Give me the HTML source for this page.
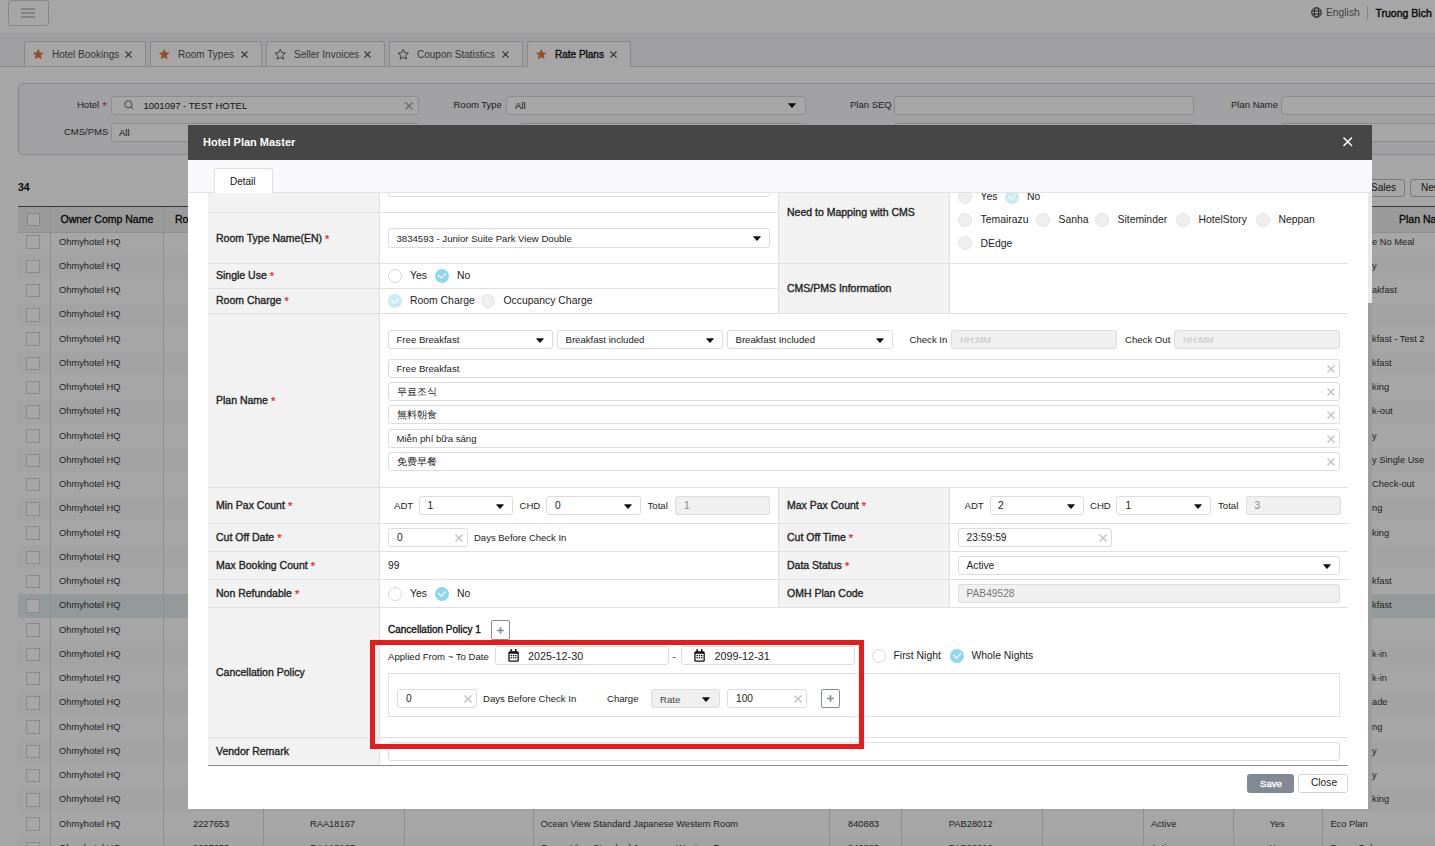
<!DOCTYPE html>
<html><head><meta charset="utf-8">
<style>
*{box-sizing:border-box;margin:0;padding:0}
html,body{width:1435px;height:846px;overflow:hidden;background:#fff;font-family:"Liberation Sans",sans-serif;color:#222}
.a{position:absolute}
.tx{position:absolute;white-space:nowrap;line-height:1}
#bg{position:absolute;left:0;top:0;width:1435px;height:846px;overflow:hidden}
#ov{position:absolute;left:0;top:0;width:1435px;height:846px;background:rgba(0,0,0,0.35)}
#modal{position:absolute;left:188px;top:125px;width:1184px;height:684px;background:#fff;overflow:hidden}
#mc{position:absolute;left:-188px;top:-125px;width:1435px;height:846px}
</style></head><body>
<div id="bg">
<div class="a" style="left:8px;top:0px;width:41px;height:26px;border:1px solid #cfcfcf;border-radius:3px;background:#fff"></div>
<div class="a" style="left:21px;top:7.9px;width:14px;height:1.8px;background:#cacaca"></div>
<div class="a" style="left:21px;top:12.1px;width:14px;height:1.8px;background:#cacaca"></div>
<div class="a" style="left:21px;top:16.3px;width:14px;height:1.8px;background:#cacaca"></div>
<svg class="a" style="left:1311px;top:7px" width="11" height="11" viewBox="0 0 11 11"><g fill="none" stroke="#333" stroke-width="1"><circle cx="5.5" cy="5.5" r="4.8"/><ellipse cx="5.5" cy="5.5" rx="2.2" ry="4.8"/><line x1="0.7" y1="4" x2="10.3" y2="4"/><line x1="0.7" y1="7" x2="10.3" y2="7"/></g></svg>
<div class="tx" style="left:1326px;top:7.12px;height:12.36px;line-height:12.36px;font-size:10.3px;color:#666;">English</div>
<div class="a" style="left:1367px;top:6px;width:1px;height:14px;background:#ccc"></div>
<div class="tx" style="left:1375.5px;top:7.0px;height:12.6px;line-height:12.6px;font-size:10.5px;color:#111;-webkit-text-stroke:0.4px #111;">Truong Bich</div>
<div class="a" style="left:0px;top:33px;width:1435px;height:34px;background:#f4f3f6"></div>
<div class="a" style="left:24px;top:41px;width:122px;height:25px;border:1px solid #d2d2d2;border-bottom:none;border-radius:3px 3px 0 0;background:#fff"></div>
<div class="a" style="left:150px;top:41px;width:112px;height:25px;border:1px solid #d2d2d2;border-bottom:none;border-radius:3px 3px 0 0;background:#fff"></div>
<div class="a" style="left:266px;top:41px;width:119px;height:25px;border:1px solid #d2d2d2;border-bottom:none;border-radius:3px 3px 0 0;background:#fff"></div>
<div class="a" style="left:389px;top:41px;width:134px;height:25px;border:1px solid #d2d2d2;border-bottom:none;border-radius:3px 3px 0 0;background:#fff"></div>
<div class="a" style="left:527px;top:41px;width:104px;height:26px;border:1px solid #d2d2d2;border-bottom:none;border-radius:3px 3px 0 0;background:#fff"></div>
<div class="a" style="left:0px;top:66px;width:527px;height:1px;background:#d4d4d4"></div>
<div class="a" style="left:631px;top:66px;width:804px;height:1px;background:#d4d4d4"></div>
<svg class="a" style="left:31.5px;top:47.5px" width="12.5" height="12.5" viewBox="0 0 24 24"><path d="M12 1.5l3.1 6.9 7.4.7-5.6 5 1.7 7.4L12 17.6l-6.6 3.9 1.7-7.4-5.6-5 7.4-.7z" fill="#e8772e"/></svg>
<div class="tx" style="left:52px;top:48.5px;height:12.0px;line-height:12.0px;font-size:10px;color:#555;">Hotel Bookings</div>
<svg class="a" style="left:125px;top:50.5px" width="7" height="7" viewBox="0 0 7 7"><path d="M0.5 0.5L6.5 6.5M6.5 0.5L0.5 6.5" stroke="#555" stroke-width="1.1"/></svg>
<svg class="a" style="left:157.5px;top:47.5px" width="12.5" height="12.5" viewBox="0 0 24 24"><path d="M12 1.5l3.1 6.9 7.4.7-5.6 5 1.7 7.4L12 17.6l-6.6 3.9 1.7-7.4-5.6-5 7.4-.7z" fill="#e8772e"/></svg>
<div class="tx" style="left:178px;top:48.5px;height:12.0px;line-height:12.0px;font-size:10px;color:#555;">Room Types</div>
<svg class="a" style="left:241px;top:50.5px" width="7" height="7" viewBox="0 0 7 7"><path d="M0.5 0.5L6.5 6.5M6.5 0.5L0.5 6.5" stroke="#555" stroke-width="1.1"/></svg>
<svg class="a" style="left:273.5px;top:47.5px" width="12.5" height="12.5" viewBox="0 0 24 24"><path d="M12 2.5l2.9 6.5 7 .7-5.3 4.7 1.6 7L12 17.8l-6.2 3.6 1.6-7L2.1 9.7l7-.7z" fill="none" stroke="#555" stroke-width="1.8" stroke-linejoin="round"/></svg>
<div class="tx" style="left:294px;top:48.5px;height:12.0px;line-height:12.0px;font-size:10px;color:#555;">Seller Invoices</div>
<svg class="a" style="left:364px;top:50.5px" width="7" height="7" viewBox="0 0 7 7"><path d="M0.5 0.5L6.5 6.5M6.5 0.5L0.5 6.5" stroke="#555" stroke-width="1.1"/></svg>
<svg class="a" style="left:396.5px;top:47.5px" width="12.5" height="12.5" viewBox="0 0 24 24"><path d="M12 2.5l2.9 6.5 7 .7-5.3 4.7 1.6 7L12 17.8l-6.2 3.6 1.6-7L2.1 9.7l7-.7z" fill="none" stroke="#555" stroke-width="1.8" stroke-linejoin="round"/></svg>
<div class="tx" style="left:417px;top:48.5px;height:12.0px;line-height:12.0px;font-size:10px;color:#555;">Coupon Statistics</div>
<svg class="a" style="left:502px;top:50.5px" width="7" height="7" viewBox="0 0 7 7"><path d="M0.5 0.5L6.5 6.5M6.5 0.5L0.5 6.5" stroke="#555" stroke-width="1.1"/></svg>
<svg class="a" style="left:534.5px;top:47.5px" width="12.5" height="12.5" viewBox="0 0 24 24"><path d="M12 1.5l3.1 6.9 7.4.7-5.6 5 1.7 7.4L12 17.6l-6.6 3.9 1.7-7.4-5.6-5 7.4-.7z" fill="#e8772e"/></svg>
<div class="tx" style="left:555px;top:48.5px;height:12.0px;line-height:12.0px;font-size:10px;color:#111;-webkit-text-stroke:0.35px #111;">Rate Plans</div>
<svg class="a" style="left:610px;top:50.5px" width="7" height="7" viewBox="0 0 7 7"><path d="M0.5 0.5L6.5 6.5M6.5 0.5L0.5 6.5" stroke="#555" stroke-width="1.1"/></svg>
<div class="a" style="left:18px;top:83px;width:1430px;height:72px;border:1px solid #d2d2d2;border-radius:5px;background:#f7f6f9"></div>
<div class="tx" style="left:77px;top:99.3px;height:11.4px;line-height:11.4px;font-size:9.5px;color:#333;">Hotel</div>
<div class="tx" style="left:102.5px;top:99.7px;height:12.6px;line-height:12.6px;font-size:10.5px;color:#e02020;">*</div>
<div class="a" style="left:110.5px;top:96px;width:308px;height:18.5px;border:1px solid #d8d8d8;border-radius:3px;background:#fff"></div>
<svg class="a" style="left:124px;top:100px" width="10" height="10" viewBox="0 0 10 10"><circle cx="4.3" cy="4.3" r="3.6" fill="none" stroke="#666" stroke-width="1"/><line x1="7" y1="7" x2="9.3" y2="9.3" stroke="#666" stroke-width="1"/></svg>
<div class="tx" style="left:143.5px;top:99.8px;height:11.4px;line-height:11.4px;font-size:9.5px;color:#222;">1001097 - TEST HOTEL</div>
<svg class="a" style="left:405px;top:101.5px" width="8" height="8" viewBox="0 0 8 8"><path d="M0.5 0.5L7.5 7.5M7.5 0.5L0.5 7.5" stroke="#aaa" stroke-width="1.5"/></svg>
<div class="tx" style="left:64px;top:126.3px;height:11.4px;line-height:11.4px;font-size:9.5px;color:#333;">CMS/PMS</div>
<div class="a" style="left:110.5px;top:123px;width:308px;height:18.5px;border:1px solid #d8d8d8;border-radius:3px;background:#fff"></div>
<div class="tx" style="left:119px;top:126.8px;height:11.4px;line-height:11.4px;font-size:9.5px;color:#222;">All</div>
<div class="tx" style="left:453.5px;top:99.3px;height:11.4px;line-height:11.4px;font-size:9.5px;color:#333;">Room Type</div>
<div class="a" style="left:505.5px;top:96px;width:300px;height:18.5px;border:1px solid #d8d8d8;border-radius:3px;background:#fff"></div>
<div class="tx" style="left:515px;top:99.8px;height:11.4px;line-height:11.4px;font-size:9.5px;color:#222;">All</div>
<svg class="a" style="left:788px;top:102.5px" width="8" height="5" viewBox="0 0 8 5"><path d="M0.7 0.2H7.3Q8 0.2 7.6 0.9L4.5 4.6Q4 5.1 3.5 4.6L0.4 0.9Q0 0.2 0.7 0.2z" fill="#111"/></svg>
<div class="a" style="left:520px;top:123px;width:285px;height:18.5px;border:1px solid #d8d8d8;border-radius:3px;background:#fff"></div>
<div class="tx" style="left:850px;top:99.3px;height:11.4px;line-height:11.4px;font-size:9.5px;color:#333;">Plan SEQ</div>
<div class="a" style="left:893.5px;top:96px;width:300px;height:18.5px;border:1px solid #d8d8d8;border-radius:3px;background:#fff"></div>
<div class="a" style="left:893.5px;top:123px;width:300px;height:18.5px;border:1px solid #d8d8d8;border-radius:3px;background:#fff"></div>
<div class="tx" style="left:1231px;top:99.3px;height:11.4px;line-height:11.4px;font-size:9.5px;color:#333;">Plan Name</div>
<div class="a" style="left:1280.5px;top:96px;width:200px;height:18.5px;border:1px solid #d8d8d8;border-radius:3px;background:#fff"></div>
<div class="a" style="left:1280.5px;top:123px;width:200px;height:18.5px;border:1px solid #d8d8d8;border-radius:3px;background:#fff"></div>
<div class="tx" style="left:18px;top:181.2px;height:12.6px;line-height:12.6px;font-size:10.5px;color:#111;font-weight:bold;">34</div>
<div class="a" style="left:1330px;top:178.5px;width:74.5px;height:18px;border:1px solid #bdbdbd;border-radius:3px;background:#fff"></div>
<div class="tx" style="left:1371px;top:182.0px;height:12.0px;line-height:12.0px;font-size:10px;color:#222;">Sales</div>
<div class="a" style="left:1409.5px;top:178.5px;width:60px;height:18px;border:1px solid #bdbdbd;border-radius:3px;background:#fff"></div>
<div class="tx" style="left:1421px;top:182.0px;height:12.0px;line-height:12.0px;font-size:10px;color:#222;">New</div>
<div class="a" style="left:18px;top:254.15px;width:1417px;height:24.25px;background:#fbfbfb"></div>
<div class="a" style="left:18px;top:302.65px;width:1417px;height:24.25px;background:#fbfbfb"></div>
<div class="a" style="left:18px;top:351.15px;width:1417px;height:24.25px;background:#fbfbfb"></div>
<div class="a" style="left:18px;top:399.65px;width:1417px;height:24.25px;background:#fbfbfb"></div>
<div class="a" style="left:18px;top:448.15px;width:1417px;height:24.25px;background:#fbfbfb"></div>
<div class="a" style="left:18px;top:496.65px;width:1417px;height:24.25px;background:#fbfbfb"></div>
<div class="a" style="left:18px;top:545.15px;width:1417px;height:24.25px;background:#fbfbfb"></div>
<div class="a" style="left:18px;top:593.65px;width:1417px;height:24.25px;background:#e4edf0"></div>
<div class="a" style="left:18px;top:642.15px;width:1417px;height:24.25px;background:#fbfbfb"></div>
<div class="a" style="left:18px;top:690.65px;width:1417px;height:24.25px;background:#fbfbfb"></div>
<div class="a" style="left:18px;top:739.15px;width:1417px;height:24.25px;background:#fbfbfb"></div>
<div class="a" style="left:18px;top:787.65px;width:1417px;height:24.25px;background:#fbfbfb"></div>
<div class="a" style="left:18px;top:836.15px;width:1417px;height:24.25px;background:#fbfbfb"></div>
<div class="a" style="left:18px;top:205.5px;width:1417px;height:1.5px;background:#555"></div>
<div class="a" style="left:18px;top:207px;width:1417px;height:25.5px;background:#efefef"></div>
<div class="a" style="left:18px;top:232px;width:1417px;height:1px;background:#dcdcdc"></div>
<div class="a" style="left:50.4px;top:207px;width:1px;height:640px;background:#dcdcdc"></div>
<div class="a" style="left:162.8px;top:207px;width:1px;height:640px;background:#dcdcdc"></div>
<div class="a" style="left:263.4px;top:207px;width:1px;height:640px;background:#dcdcdc"></div>
<div class="a" style="left:403.9px;top:207px;width:1px;height:640px;background:#dcdcdc"></div>
<div class="a" style="left:532.6px;top:207px;width:1px;height:640px;background:#dcdcdc"></div>
<div class="a" style="left:828.6px;top:207px;width:1px;height:640px;background:#dcdcdc"></div>
<div class="a" style="left:901.4px;top:207px;width:1px;height:640px;background:#dcdcdc"></div>
<div class="a" style="left:1041.6px;top:207px;width:1px;height:640px;background:#dcdcdc"></div>
<div class="a" style="left:1142.7px;top:207px;width:1px;height:640px;background:#dcdcdc"></div>
<div class="a" style="left:1232.5px;top:207px;width:1px;height:640px;background:#dcdcdc"></div>
<div class="a" style="left:1321.9px;top:207px;width:1px;height:640px;background:#dcdcdc"></div>
<div class="a" style="left:27px;top:212.5px;width:13px;height:13px;border:1px solid #d0d0d0;background:#fff"></div>
<div class="tx" style="left:60.5px;top:212.7px;height:12.6px;line-height:12.6px;font-size:10.5px;color:#111;-webkit-text-stroke:0.35px #111;">Owner Comp Name</div>
<div class="tx" style="left:175px;top:212.7px;height:12.6px;line-height:12.6px;font-size:10.5px;color:#111;-webkit-text-stroke:0.35px #111;">Room</div>
<div class="tx" style="left:1399px;top:212.7px;height:12.6px;line-height:12.6px;font-size:10.5px;color:#111;-webkit-text-stroke:0.35px #111;">Plan Name</div>
<div class="a" style="left:26.2px;top:235.3px;width:13.6px;height:13.6px;border:1px solid #d4d4d4;background:#fff"></div>
<div class="tx" style="left:59px;top:236.52px;height:11.16px;line-height:11.16px;font-size:9.3px;color:#333;">Ohmyhotel HQ</div>
<div class="tx" style="left:1372px;top:236.52px;height:11.16px;line-height:11.16px;font-size:9.3px;color:#333;">e No Meal</div>
<div class="tx" style="left:193px;top:236.52px;height:11.16px;line-height:11.16px;font-size:9.3px;color:#333;">2227653</div>
<div class="tx" style="left:310px;top:236.52px;height:11.16px;line-height:11.16px;font-size:9.3px;color:#333;">RAA18167</div>
<div class="tx" style="left:540.5px;top:236.52px;height:11.16px;line-height:11.16px;font-size:9.3px;color:#333;">Ocean View Standard Japanese Western Room</div>
<div class="tx" style="left:848px;top:236.52px;height:11.16px;line-height:11.16px;font-size:9.3px;color:#333;">840883</div>
<div class="tx" style="left:948.8px;top:236.52px;height:11.16px;line-height:11.16px;font-size:9.3px;color:#333;">PAB28012</div>
<div class="tx" style="left:1151px;top:236.52px;height:11.16px;line-height:11.16px;font-size:9.3px;color:#333;">Active</div>
<div class="tx" style="left:1269.4px;top:236.52px;height:11.16px;line-height:11.16px;font-size:9.3px;color:#333;">Yes</div>
<div class="a" style="left:26.2px;top:259.55px;width:13.6px;height:13.6px;border:1px solid #d4d4d4;background:#fff"></div>
<div class="tx" style="left:59px;top:260.77px;height:11.16px;line-height:11.16px;font-size:9.3px;color:#333;">Ohmyhotel HQ</div>
<div class="tx" style="left:1372px;top:260.77px;height:11.16px;line-height:11.16px;font-size:9.3px;color:#333;">y</div>
<div class="tx" style="left:193px;top:260.77px;height:11.16px;line-height:11.16px;font-size:9.3px;color:#333;">2227653</div>
<div class="tx" style="left:310px;top:260.77px;height:11.16px;line-height:11.16px;font-size:9.3px;color:#333;">RAA18167</div>
<div class="tx" style="left:540.5px;top:260.77px;height:11.16px;line-height:11.16px;font-size:9.3px;color:#333;">Ocean View Standard Japanese Western Room</div>
<div class="tx" style="left:848px;top:260.77px;height:11.16px;line-height:11.16px;font-size:9.3px;color:#333;">840883</div>
<div class="tx" style="left:948.8px;top:260.77px;height:11.16px;line-height:11.16px;font-size:9.3px;color:#333;">PAB28012</div>
<div class="tx" style="left:1151px;top:260.77px;height:11.16px;line-height:11.16px;font-size:9.3px;color:#333;">Active</div>
<div class="tx" style="left:1269.4px;top:260.77px;height:11.16px;line-height:11.16px;font-size:9.3px;color:#333;">Yes</div>
<div class="a" style="left:26.2px;top:283.8px;width:13.6px;height:13.6px;border:1px solid #d4d4d4;background:#fff"></div>
<div class="tx" style="left:59px;top:285.02px;height:11.16px;line-height:11.16px;font-size:9.3px;color:#333;">Ohmyhotel HQ</div>
<div class="tx" style="left:1372px;top:285.02px;height:11.16px;line-height:11.16px;font-size:9.3px;color:#333;">akfast</div>
<div class="tx" style="left:193px;top:285.02px;height:11.16px;line-height:11.16px;font-size:9.3px;color:#333;">2227653</div>
<div class="tx" style="left:310px;top:285.02px;height:11.16px;line-height:11.16px;font-size:9.3px;color:#333;">RAA18167</div>
<div class="tx" style="left:540.5px;top:285.02px;height:11.16px;line-height:11.16px;font-size:9.3px;color:#333;">Ocean View Standard Japanese Western Room</div>
<div class="tx" style="left:848px;top:285.02px;height:11.16px;line-height:11.16px;font-size:9.3px;color:#333;">840883</div>
<div class="tx" style="left:948.8px;top:285.02px;height:11.16px;line-height:11.16px;font-size:9.3px;color:#333;">PAB28012</div>
<div class="tx" style="left:1151px;top:285.02px;height:11.16px;line-height:11.16px;font-size:9.3px;color:#333;">Active</div>
<div class="tx" style="left:1269.4px;top:285.02px;height:11.16px;line-height:11.16px;font-size:9.3px;color:#333;">Yes</div>
<div class="a" style="left:26.2px;top:308.05px;width:13.6px;height:13.6px;border:1px solid #d4d4d4;background:#fff"></div>
<div class="tx" style="left:59px;top:309.27px;height:11.16px;line-height:11.16px;font-size:9.3px;color:#333;">Ohmyhotel HQ</div>
<div class="tx" style="left:1372px;top:309.27px;height:11.16px;line-height:11.16px;font-size:9.3px;color:#333;"></div>
<div class="tx" style="left:193px;top:309.27px;height:11.16px;line-height:11.16px;font-size:9.3px;color:#333;">2227653</div>
<div class="tx" style="left:310px;top:309.27px;height:11.16px;line-height:11.16px;font-size:9.3px;color:#333;">RAA18167</div>
<div class="tx" style="left:540.5px;top:309.27px;height:11.16px;line-height:11.16px;font-size:9.3px;color:#333;">Ocean View Standard Japanese Western Room</div>
<div class="tx" style="left:848px;top:309.27px;height:11.16px;line-height:11.16px;font-size:9.3px;color:#333;">840883</div>
<div class="tx" style="left:948.8px;top:309.27px;height:11.16px;line-height:11.16px;font-size:9.3px;color:#333;">PAB28012</div>
<div class="tx" style="left:1151px;top:309.27px;height:11.16px;line-height:11.16px;font-size:9.3px;color:#333;">Active</div>
<div class="tx" style="left:1269.4px;top:309.27px;height:11.16px;line-height:11.16px;font-size:9.3px;color:#333;">Yes</div>
<div class="a" style="left:26.2px;top:332.3px;width:13.6px;height:13.6px;border:1px solid #d4d4d4;background:#fff"></div>
<div class="tx" style="left:59px;top:333.52px;height:11.16px;line-height:11.16px;font-size:9.3px;color:#333;">Ohmyhotel HQ</div>
<div class="tx" style="left:1372px;top:333.52px;height:11.16px;line-height:11.16px;font-size:9.3px;color:#333;">kfast - Test 2</div>
<div class="tx" style="left:193px;top:333.52px;height:11.16px;line-height:11.16px;font-size:9.3px;color:#333;">2227653</div>
<div class="tx" style="left:310px;top:333.52px;height:11.16px;line-height:11.16px;font-size:9.3px;color:#333;">RAA18167</div>
<div class="tx" style="left:540.5px;top:333.52px;height:11.16px;line-height:11.16px;font-size:9.3px;color:#333;">Ocean View Standard Japanese Western Room</div>
<div class="tx" style="left:848px;top:333.52px;height:11.16px;line-height:11.16px;font-size:9.3px;color:#333;">840883</div>
<div class="tx" style="left:948.8px;top:333.52px;height:11.16px;line-height:11.16px;font-size:9.3px;color:#333;">PAB28012</div>
<div class="tx" style="left:1151px;top:333.52px;height:11.16px;line-height:11.16px;font-size:9.3px;color:#333;">Active</div>
<div class="tx" style="left:1269.4px;top:333.52px;height:11.16px;line-height:11.16px;font-size:9.3px;color:#333;">Yes</div>
<div class="a" style="left:26.2px;top:356.55px;width:13.6px;height:13.6px;border:1px solid #d4d4d4;background:#fff"></div>
<div class="tx" style="left:59px;top:357.77px;height:11.16px;line-height:11.16px;font-size:9.3px;color:#333;">Ohmyhotel HQ</div>
<div class="tx" style="left:1372px;top:357.77px;height:11.16px;line-height:11.16px;font-size:9.3px;color:#333;">kfast</div>
<div class="tx" style="left:193px;top:357.77px;height:11.16px;line-height:11.16px;font-size:9.3px;color:#333;">2227653</div>
<div class="tx" style="left:310px;top:357.77px;height:11.16px;line-height:11.16px;font-size:9.3px;color:#333;">RAA18167</div>
<div class="tx" style="left:540.5px;top:357.77px;height:11.16px;line-height:11.16px;font-size:9.3px;color:#333;">Ocean View Standard Japanese Western Room</div>
<div class="tx" style="left:848px;top:357.77px;height:11.16px;line-height:11.16px;font-size:9.3px;color:#333;">840883</div>
<div class="tx" style="left:948.8px;top:357.77px;height:11.16px;line-height:11.16px;font-size:9.3px;color:#333;">PAB28012</div>
<div class="tx" style="left:1151px;top:357.77px;height:11.16px;line-height:11.16px;font-size:9.3px;color:#333;">Active</div>
<div class="tx" style="left:1269.4px;top:357.77px;height:11.16px;line-height:11.16px;font-size:9.3px;color:#333;">Yes</div>
<div class="a" style="left:26.2px;top:380.8px;width:13.6px;height:13.6px;border:1px solid #d4d4d4;background:#fff"></div>
<div class="tx" style="left:59px;top:382.02px;height:11.16px;line-height:11.16px;font-size:9.3px;color:#333;">Ohmyhotel HQ</div>
<div class="tx" style="left:1372px;top:382.02px;height:11.16px;line-height:11.16px;font-size:9.3px;color:#333;">king</div>
<div class="tx" style="left:193px;top:382.02px;height:11.16px;line-height:11.16px;font-size:9.3px;color:#333;">2227653</div>
<div class="tx" style="left:310px;top:382.02px;height:11.16px;line-height:11.16px;font-size:9.3px;color:#333;">RAA18167</div>
<div class="tx" style="left:540.5px;top:382.02px;height:11.16px;line-height:11.16px;font-size:9.3px;color:#333;">Ocean View Standard Japanese Western Room</div>
<div class="tx" style="left:848px;top:382.02px;height:11.16px;line-height:11.16px;font-size:9.3px;color:#333;">840883</div>
<div class="tx" style="left:948.8px;top:382.02px;height:11.16px;line-height:11.16px;font-size:9.3px;color:#333;">PAB28012</div>
<div class="tx" style="left:1151px;top:382.02px;height:11.16px;line-height:11.16px;font-size:9.3px;color:#333;">Active</div>
<div class="tx" style="left:1269.4px;top:382.02px;height:11.16px;line-height:11.16px;font-size:9.3px;color:#333;">Yes</div>
<div class="a" style="left:26.2px;top:405.05px;width:13.6px;height:13.6px;border:1px solid #d4d4d4;background:#fff"></div>
<div class="tx" style="left:59px;top:406.27px;height:11.16px;line-height:11.16px;font-size:9.3px;color:#333;">Ohmyhotel HQ</div>
<div class="tx" style="left:1372px;top:406.27px;height:11.16px;line-height:11.16px;font-size:9.3px;color:#333;">k-out</div>
<div class="tx" style="left:193px;top:406.27px;height:11.16px;line-height:11.16px;font-size:9.3px;color:#333;">2227653</div>
<div class="tx" style="left:310px;top:406.27px;height:11.16px;line-height:11.16px;font-size:9.3px;color:#333;">RAA18167</div>
<div class="tx" style="left:540.5px;top:406.27px;height:11.16px;line-height:11.16px;font-size:9.3px;color:#333;">Ocean View Standard Japanese Western Room</div>
<div class="tx" style="left:848px;top:406.27px;height:11.16px;line-height:11.16px;font-size:9.3px;color:#333;">840883</div>
<div class="tx" style="left:948.8px;top:406.27px;height:11.16px;line-height:11.16px;font-size:9.3px;color:#333;">PAB28012</div>
<div class="tx" style="left:1151px;top:406.27px;height:11.16px;line-height:11.16px;font-size:9.3px;color:#333;">Active</div>
<div class="tx" style="left:1269.4px;top:406.27px;height:11.16px;line-height:11.16px;font-size:9.3px;color:#333;">Yes</div>
<div class="a" style="left:26.2px;top:429.3px;width:13.6px;height:13.6px;border:1px solid #d4d4d4;background:#fff"></div>
<div class="tx" style="left:59px;top:430.52px;height:11.16px;line-height:11.16px;font-size:9.3px;color:#333;">Ohmyhotel HQ</div>
<div class="tx" style="left:1372px;top:430.52px;height:11.16px;line-height:11.16px;font-size:9.3px;color:#333;">y</div>
<div class="tx" style="left:193px;top:430.52px;height:11.16px;line-height:11.16px;font-size:9.3px;color:#333;">2227653</div>
<div class="tx" style="left:310px;top:430.52px;height:11.16px;line-height:11.16px;font-size:9.3px;color:#333;">RAA18167</div>
<div class="tx" style="left:540.5px;top:430.52px;height:11.16px;line-height:11.16px;font-size:9.3px;color:#333;">Ocean View Standard Japanese Western Room</div>
<div class="tx" style="left:848px;top:430.52px;height:11.16px;line-height:11.16px;font-size:9.3px;color:#333;">840883</div>
<div class="tx" style="left:948.8px;top:430.52px;height:11.16px;line-height:11.16px;font-size:9.3px;color:#333;">PAB28012</div>
<div class="tx" style="left:1151px;top:430.52px;height:11.16px;line-height:11.16px;font-size:9.3px;color:#333;">Active</div>
<div class="tx" style="left:1269.4px;top:430.52px;height:11.16px;line-height:11.16px;font-size:9.3px;color:#333;">Yes</div>
<div class="a" style="left:26.2px;top:453.55px;width:13.6px;height:13.6px;border:1px solid #d4d4d4;background:#fff"></div>
<div class="tx" style="left:59px;top:454.77px;height:11.16px;line-height:11.16px;font-size:9.3px;color:#333;">Ohmyhotel HQ</div>
<div class="tx" style="left:1372px;top:454.77px;height:11.16px;line-height:11.16px;font-size:9.3px;color:#333;">y Single Use</div>
<div class="tx" style="left:193px;top:454.77px;height:11.16px;line-height:11.16px;font-size:9.3px;color:#333;">2227653</div>
<div class="tx" style="left:310px;top:454.77px;height:11.16px;line-height:11.16px;font-size:9.3px;color:#333;">RAA18167</div>
<div class="tx" style="left:540.5px;top:454.77px;height:11.16px;line-height:11.16px;font-size:9.3px;color:#333;">Ocean View Standard Japanese Western Room</div>
<div class="tx" style="left:848px;top:454.77px;height:11.16px;line-height:11.16px;font-size:9.3px;color:#333;">840883</div>
<div class="tx" style="left:948.8px;top:454.77px;height:11.16px;line-height:11.16px;font-size:9.3px;color:#333;">PAB28012</div>
<div class="tx" style="left:1151px;top:454.77px;height:11.16px;line-height:11.16px;font-size:9.3px;color:#333;">Active</div>
<div class="tx" style="left:1269.4px;top:454.77px;height:11.16px;line-height:11.16px;font-size:9.3px;color:#333;">Yes</div>
<div class="a" style="left:26.2px;top:477.8px;width:13.6px;height:13.6px;border:1px solid #d4d4d4;background:#fff"></div>
<div class="tx" style="left:59px;top:479.02px;height:11.16px;line-height:11.16px;font-size:9.3px;color:#333;">Ohmyhotel HQ</div>
<div class="tx" style="left:1372px;top:479.02px;height:11.16px;line-height:11.16px;font-size:9.3px;color:#333;">Check-out</div>
<div class="tx" style="left:193px;top:479.02px;height:11.16px;line-height:11.16px;font-size:9.3px;color:#333;">2227653</div>
<div class="tx" style="left:310px;top:479.02px;height:11.16px;line-height:11.16px;font-size:9.3px;color:#333;">RAA18167</div>
<div class="tx" style="left:540.5px;top:479.02px;height:11.16px;line-height:11.16px;font-size:9.3px;color:#333;">Ocean View Standard Japanese Western Room</div>
<div class="tx" style="left:848px;top:479.02px;height:11.16px;line-height:11.16px;font-size:9.3px;color:#333;">840883</div>
<div class="tx" style="left:948.8px;top:479.02px;height:11.16px;line-height:11.16px;font-size:9.3px;color:#333;">PAB28012</div>
<div class="tx" style="left:1151px;top:479.02px;height:11.16px;line-height:11.16px;font-size:9.3px;color:#333;">Active</div>
<div class="tx" style="left:1269.4px;top:479.02px;height:11.16px;line-height:11.16px;font-size:9.3px;color:#333;">Yes</div>
<div class="a" style="left:26.2px;top:502.05px;width:13.6px;height:13.6px;border:1px solid #d4d4d4;background:#fff"></div>
<div class="tx" style="left:59px;top:503.27px;height:11.16px;line-height:11.16px;font-size:9.3px;color:#333;">Ohmyhotel HQ</div>
<div class="tx" style="left:1372px;top:503.27px;height:11.16px;line-height:11.16px;font-size:9.3px;color:#333;">ng</div>
<div class="tx" style="left:193px;top:503.27px;height:11.16px;line-height:11.16px;font-size:9.3px;color:#333;">2227653</div>
<div class="tx" style="left:310px;top:503.27px;height:11.16px;line-height:11.16px;font-size:9.3px;color:#333;">RAA18167</div>
<div class="tx" style="left:540.5px;top:503.27px;height:11.16px;line-height:11.16px;font-size:9.3px;color:#333;">Ocean View Standard Japanese Western Room</div>
<div class="tx" style="left:848px;top:503.27px;height:11.16px;line-height:11.16px;font-size:9.3px;color:#333;">840883</div>
<div class="tx" style="left:948.8px;top:503.27px;height:11.16px;line-height:11.16px;font-size:9.3px;color:#333;">PAB28012</div>
<div class="tx" style="left:1151px;top:503.27px;height:11.16px;line-height:11.16px;font-size:9.3px;color:#333;">Active</div>
<div class="tx" style="left:1269.4px;top:503.27px;height:11.16px;line-height:11.16px;font-size:9.3px;color:#333;">Yes</div>
<div class="a" style="left:26.2px;top:526.3px;width:13.6px;height:13.6px;border:1px solid #d4d4d4;background:#fff"></div>
<div class="tx" style="left:59px;top:527.52px;height:11.16px;line-height:11.16px;font-size:9.3px;color:#333;">Ohmyhotel HQ</div>
<div class="tx" style="left:1372px;top:527.52px;height:11.16px;line-height:11.16px;font-size:9.3px;color:#333;">king</div>
<div class="tx" style="left:193px;top:527.52px;height:11.16px;line-height:11.16px;font-size:9.3px;color:#333;">2227653</div>
<div class="tx" style="left:310px;top:527.52px;height:11.16px;line-height:11.16px;font-size:9.3px;color:#333;">RAA18167</div>
<div class="tx" style="left:540.5px;top:527.52px;height:11.16px;line-height:11.16px;font-size:9.3px;color:#333;">Ocean View Standard Japanese Western Room</div>
<div class="tx" style="left:848px;top:527.52px;height:11.16px;line-height:11.16px;font-size:9.3px;color:#333;">840883</div>
<div class="tx" style="left:948.8px;top:527.52px;height:11.16px;line-height:11.16px;font-size:9.3px;color:#333;">PAB28012</div>
<div class="tx" style="left:1151px;top:527.52px;height:11.16px;line-height:11.16px;font-size:9.3px;color:#333;">Active</div>
<div class="tx" style="left:1269.4px;top:527.52px;height:11.16px;line-height:11.16px;font-size:9.3px;color:#333;">Yes</div>
<div class="a" style="left:26.2px;top:550.55px;width:13.6px;height:13.6px;border:1px solid #d4d4d4;background:#fff"></div>
<div class="tx" style="left:59px;top:551.77px;height:11.16px;line-height:11.16px;font-size:9.3px;color:#333;">Ohmyhotel HQ</div>
<div class="tx" style="left:1372px;top:551.77px;height:11.16px;line-height:11.16px;font-size:9.3px;color:#333;"></div>
<div class="tx" style="left:193px;top:551.77px;height:11.16px;line-height:11.16px;font-size:9.3px;color:#333;">2227653</div>
<div class="tx" style="left:310px;top:551.77px;height:11.16px;line-height:11.16px;font-size:9.3px;color:#333;">RAA18167</div>
<div class="tx" style="left:540.5px;top:551.77px;height:11.16px;line-height:11.16px;font-size:9.3px;color:#333;">Ocean View Standard Japanese Western Room</div>
<div class="tx" style="left:848px;top:551.77px;height:11.16px;line-height:11.16px;font-size:9.3px;color:#333;">840883</div>
<div class="tx" style="left:948.8px;top:551.77px;height:11.16px;line-height:11.16px;font-size:9.3px;color:#333;">PAB28012</div>
<div class="tx" style="left:1151px;top:551.77px;height:11.16px;line-height:11.16px;font-size:9.3px;color:#333;">Active</div>
<div class="tx" style="left:1269.4px;top:551.77px;height:11.16px;line-height:11.16px;font-size:9.3px;color:#333;">Yes</div>
<div class="a" style="left:26.2px;top:574.8px;width:13.6px;height:13.6px;border:1px solid #d4d4d4;background:#fff"></div>
<div class="tx" style="left:59px;top:576.02px;height:11.16px;line-height:11.16px;font-size:9.3px;color:#333;">Ohmyhotel HQ</div>
<div class="tx" style="left:1372px;top:576.02px;height:11.16px;line-height:11.16px;font-size:9.3px;color:#333;">kfast</div>
<div class="tx" style="left:193px;top:576.02px;height:11.16px;line-height:11.16px;font-size:9.3px;color:#333;">2227653</div>
<div class="tx" style="left:310px;top:576.02px;height:11.16px;line-height:11.16px;font-size:9.3px;color:#333;">RAA18167</div>
<div class="tx" style="left:540.5px;top:576.02px;height:11.16px;line-height:11.16px;font-size:9.3px;color:#333;">Ocean View Standard Japanese Western Room</div>
<div class="tx" style="left:848px;top:576.02px;height:11.16px;line-height:11.16px;font-size:9.3px;color:#333;">840883</div>
<div class="tx" style="left:948.8px;top:576.02px;height:11.16px;line-height:11.16px;font-size:9.3px;color:#333;">PAB28012</div>
<div class="tx" style="left:1151px;top:576.02px;height:11.16px;line-height:11.16px;font-size:9.3px;color:#333;">Active</div>
<div class="tx" style="left:1269.4px;top:576.02px;height:11.16px;line-height:11.16px;font-size:9.3px;color:#333;">Yes</div>
<div class="a" style="left:26.2px;top:599.05px;width:13.6px;height:13.6px;border:1px solid #d4d4d4;background:#fff"></div>
<div class="tx" style="left:59px;top:600.27px;height:11.16px;line-height:11.16px;font-size:9.3px;color:#333;">Ohmyhotel HQ</div>
<div class="tx" style="left:1372px;top:600.27px;height:11.16px;line-height:11.16px;font-size:9.3px;color:#333;">kfast</div>
<div class="tx" style="left:193px;top:600.27px;height:11.16px;line-height:11.16px;font-size:9.3px;color:#333;">2227653</div>
<div class="tx" style="left:310px;top:600.27px;height:11.16px;line-height:11.16px;font-size:9.3px;color:#333;">RAA18167</div>
<div class="tx" style="left:540.5px;top:600.27px;height:11.16px;line-height:11.16px;font-size:9.3px;color:#333;">Ocean View Standard Japanese Western Room</div>
<div class="tx" style="left:848px;top:600.27px;height:11.16px;line-height:11.16px;font-size:9.3px;color:#333;">840883</div>
<div class="tx" style="left:948.8px;top:600.27px;height:11.16px;line-height:11.16px;font-size:9.3px;color:#333;">PAB28012</div>
<div class="tx" style="left:1151px;top:600.27px;height:11.16px;line-height:11.16px;font-size:9.3px;color:#333;">Active</div>
<div class="tx" style="left:1269.4px;top:600.27px;height:11.16px;line-height:11.16px;font-size:9.3px;color:#333;">Yes</div>
<div class="a" style="left:26.2px;top:623.3px;width:13.6px;height:13.6px;border:1px solid #d4d4d4;background:#fff"></div>
<div class="tx" style="left:59px;top:624.52px;height:11.16px;line-height:11.16px;font-size:9.3px;color:#333;">Ohmyhotel HQ</div>
<div class="tx" style="left:1372px;top:624.52px;height:11.16px;line-height:11.16px;font-size:9.3px;color:#333;"></div>
<div class="tx" style="left:193px;top:624.52px;height:11.16px;line-height:11.16px;font-size:9.3px;color:#333;">2227653</div>
<div class="tx" style="left:310px;top:624.52px;height:11.16px;line-height:11.16px;font-size:9.3px;color:#333;">RAA18167</div>
<div class="tx" style="left:540.5px;top:624.52px;height:11.16px;line-height:11.16px;font-size:9.3px;color:#333;">Ocean View Standard Japanese Western Room</div>
<div class="tx" style="left:848px;top:624.52px;height:11.16px;line-height:11.16px;font-size:9.3px;color:#333;">840883</div>
<div class="tx" style="left:948.8px;top:624.52px;height:11.16px;line-height:11.16px;font-size:9.3px;color:#333;">PAB28012</div>
<div class="tx" style="left:1151px;top:624.52px;height:11.16px;line-height:11.16px;font-size:9.3px;color:#333;">Active</div>
<div class="tx" style="left:1269.4px;top:624.52px;height:11.16px;line-height:11.16px;font-size:9.3px;color:#333;">Yes</div>
<div class="a" style="left:26.2px;top:647.55px;width:13.6px;height:13.6px;border:1px solid #d4d4d4;background:#fff"></div>
<div class="tx" style="left:59px;top:648.77px;height:11.16px;line-height:11.16px;font-size:9.3px;color:#333;">Ohmyhotel HQ</div>
<div class="tx" style="left:1372px;top:648.77px;height:11.16px;line-height:11.16px;font-size:9.3px;color:#333;">k-in</div>
<div class="tx" style="left:193px;top:648.77px;height:11.16px;line-height:11.16px;font-size:9.3px;color:#333;">2227653</div>
<div class="tx" style="left:310px;top:648.77px;height:11.16px;line-height:11.16px;font-size:9.3px;color:#333;">RAA18167</div>
<div class="tx" style="left:540.5px;top:648.77px;height:11.16px;line-height:11.16px;font-size:9.3px;color:#333;">Ocean View Standard Japanese Western Room</div>
<div class="tx" style="left:848px;top:648.77px;height:11.16px;line-height:11.16px;font-size:9.3px;color:#333;">840883</div>
<div class="tx" style="left:948.8px;top:648.77px;height:11.16px;line-height:11.16px;font-size:9.3px;color:#333;">PAB28012</div>
<div class="tx" style="left:1151px;top:648.77px;height:11.16px;line-height:11.16px;font-size:9.3px;color:#333;">Active</div>
<div class="tx" style="left:1269.4px;top:648.77px;height:11.16px;line-height:11.16px;font-size:9.3px;color:#333;">Yes</div>
<div class="a" style="left:26.2px;top:671.8px;width:13.6px;height:13.6px;border:1px solid #d4d4d4;background:#fff"></div>
<div class="tx" style="left:59px;top:673.02px;height:11.16px;line-height:11.16px;font-size:9.3px;color:#333;">Ohmyhotel HQ</div>
<div class="tx" style="left:1372px;top:673.02px;height:11.16px;line-height:11.16px;font-size:9.3px;color:#333;">k-in</div>
<div class="tx" style="left:193px;top:673.02px;height:11.16px;line-height:11.16px;font-size:9.3px;color:#333;">2227653</div>
<div class="tx" style="left:310px;top:673.02px;height:11.16px;line-height:11.16px;font-size:9.3px;color:#333;">RAA18167</div>
<div class="tx" style="left:540.5px;top:673.02px;height:11.16px;line-height:11.16px;font-size:9.3px;color:#333;">Ocean View Standard Japanese Western Room</div>
<div class="tx" style="left:848px;top:673.02px;height:11.16px;line-height:11.16px;font-size:9.3px;color:#333;">840883</div>
<div class="tx" style="left:948.8px;top:673.02px;height:11.16px;line-height:11.16px;font-size:9.3px;color:#333;">PAB28012</div>
<div class="tx" style="left:1151px;top:673.02px;height:11.16px;line-height:11.16px;font-size:9.3px;color:#333;">Active</div>
<div class="tx" style="left:1269.4px;top:673.02px;height:11.16px;line-height:11.16px;font-size:9.3px;color:#333;">Yes</div>
<div class="a" style="left:26.2px;top:696.05px;width:13.6px;height:13.6px;border:1px solid #d4d4d4;background:#fff"></div>
<div class="tx" style="left:59px;top:697.27px;height:11.16px;line-height:11.16px;font-size:9.3px;color:#333;">Ohmyhotel HQ</div>
<div class="tx" style="left:1372px;top:697.27px;height:11.16px;line-height:11.16px;font-size:9.3px;color:#333;">ade</div>
<div class="tx" style="left:193px;top:697.27px;height:11.16px;line-height:11.16px;font-size:9.3px;color:#333;">2227653</div>
<div class="tx" style="left:310px;top:697.27px;height:11.16px;line-height:11.16px;font-size:9.3px;color:#333;">RAA18167</div>
<div class="tx" style="left:540.5px;top:697.27px;height:11.16px;line-height:11.16px;font-size:9.3px;color:#333;">Ocean View Standard Japanese Western Room</div>
<div class="tx" style="left:848px;top:697.27px;height:11.16px;line-height:11.16px;font-size:9.3px;color:#333;">840883</div>
<div class="tx" style="left:948.8px;top:697.27px;height:11.16px;line-height:11.16px;font-size:9.3px;color:#333;">PAB28012</div>
<div class="tx" style="left:1151px;top:697.27px;height:11.16px;line-height:11.16px;font-size:9.3px;color:#333;">Active</div>
<div class="tx" style="left:1269.4px;top:697.27px;height:11.16px;line-height:11.16px;font-size:9.3px;color:#333;">Yes</div>
<div class="a" style="left:26.2px;top:720.3px;width:13.6px;height:13.6px;border:1px solid #d4d4d4;background:#fff"></div>
<div class="tx" style="left:59px;top:721.52px;height:11.16px;line-height:11.16px;font-size:9.3px;color:#333;">Ohmyhotel HQ</div>
<div class="tx" style="left:1372px;top:721.52px;height:11.16px;line-height:11.16px;font-size:9.3px;color:#333;">ng</div>
<div class="tx" style="left:193px;top:721.52px;height:11.16px;line-height:11.16px;font-size:9.3px;color:#333;">2227653</div>
<div class="tx" style="left:310px;top:721.52px;height:11.16px;line-height:11.16px;font-size:9.3px;color:#333;">RAA18167</div>
<div class="tx" style="left:540.5px;top:721.52px;height:11.16px;line-height:11.16px;font-size:9.3px;color:#333;">Ocean View Standard Japanese Western Room</div>
<div class="tx" style="left:848px;top:721.52px;height:11.16px;line-height:11.16px;font-size:9.3px;color:#333;">840883</div>
<div class="tx" style="left:948.8px;top:721.52px;height:11.16px;line-height:11.16px;font-size:9.3px;color:#333;">PAB28012</div>
<div class="tx" style="left:1151px;top:721.52px;height:11.16px;line-height:11.16px;font-size:9.3px;color:#333;">Active</div>
<div class="tx" style="left:1269.4px;top:721.52px;height:11.16px;line-height:11.16px;font-size:9.3px;color:#333;">Yes</div>
<div class="a" style="left:26.2px;top:744.55px;width:13.6px;height:13.6px;border:1px solid #d4d4d4;background:#fff"></div>
<div class="tx" style="left:59px;top:745.77px;height:11.16px;line-height:11.16px;font-size:9.3px;color:#333;">Ohmyhotel HQ</div>
<div class="tx" style="left:1372px;top:745.77px;height:11.16px;line-height:11.16px;font-size:9.3px;color:#333;">y</div>
<div class="tx" style="left:193px;top:745.77px;height:11.16px;line-height:11.16px;font-size:9.3px;color:#333;">2227653</div>
<div class="tx" style="left:310px;top:745.77px;height:11.16px;line-height:11.16px;font-size:9.3px;color:#333;">RAA18167</div>
<div class="tx" style="left:540.5px;top:745.77px;height:11.16px;line-height:11.16px;font-size:9.3px;color:#333;">Ocean View Standard Japanese Western Room</div>
<div class="tx" style="left:848px;top:745.77px;height:11.16px;line-height:11.16px;font-size:9.3px;color:#333;">840883</div>
<div class="tx" style="left:948.8px;top:745.77px;height:11.16px;line-height:11.16px;font-size:9.3px;color:#333;">PAB28012</div>
<div class="tx" style="left:1151px;top:745.77px;height:11.16px;line-height:11.16px;font-size:9.3px;color:#333;">Active</div>
<div class="tx" style="left:1269.4px;top:745.77px;height:11.16px;line-height:11.16px;font-size:9.3px;color:#333;">Yes</div>
<div class="a" style="left:26.2px;top:768.8px;width:13.6px;height:13.6px;border:1px solid #d4d4d4;background:#fff"></div>
<div class="tx" style="left:59px;top:770.02px;height:11.16px;line-height:11.16px;font-size:9.3px;color:#333;">Ohmyhotel HQ</div>
<div class="tx" style="left:1372px;top:770.02px;height:11.16px;line-height:11.16px;font-size:9.3px;color:#333;">y</div>
<div class="tx" style="left:193px;top:770.02px;height:11.16px;line-height:11.16px;font-size:9.3px;color:#333;">2227653</div>
<div class="tx" style="left:310px;top:770.02px;height:11.16px;line-height:11.16px;font-size:9.3px;color:#333;">RAA18167</div>
<div class="tx" style="left:540.5px;top:770.02px;height:11.16px;line-height:11.16px;font-size:9.3px;color:#333;">Ocean View Standard Japanese Western Room</div>
<div class="tx" style="left:848px;top:770.02px;height:11.16px;line-height:11.16px;font-size:9.3px;color:#333;">840883</div>
<div class="tx" style="left:948.8px;top:770.02px;height:11.16px;line-height:11.16px;font-size:9.3px;color:#333;">PAB28012</div>
<div class="tx" style="left:1151px;top:770.02px;height:11.16px;line-height:11.16px;font-size:9.3px;color:#333;">Active</div>
<div class="tx" style="left:1269.4px;top:770.02px;height:11.16px;line-height:11.16px;font-size:9.3px;color:#333;">Yes</div>
<div class="a" style="left:26.2px;top:793.05px;width:13.6px;height:13.6px;border:1px solid #d4d4d4;background:#fff"></div>
<div class="tx" style="left:59px;top:794.27px;height:11.16px;line-height:11.16px;font-size:9.3px;color:#333;">Ohmyhotel HQ</div>
<div class="tx" style="left:1372px;top:794.27px;height:11.16px;line-height:11.16px;font-size:9.3px;color:#333;">king</div>
<div class="tx" style="left:193px;top:794.27px;height:11.16px;line-height:11.16px;font-size:9.3px;color:#333;">2227653</div>
<div class="tx" style="left:310px;top:794.27px;height:11.16px;line-height:11.16px;font-size:9.3px;color:#333;">RAA18167</div>
<div class="tx" style="left:540.5px;top:794.27px;height:11.16px;line-height:11.16px;font-size:9.3px;color:#333;">Ocean View Standard Japanese Western Room</div>
<div class="tx" style="left:848px;top:794.27px;height:11.16px;line-height:11.16px;font-size:9.3px;color:#333;">840883</div>
<div class="tx" style="left:948.8px;top:794.27px;height:11.16px;line-height:11.16px;font-size:9.3px;color:#333;">PAB28012</div>
<div class="tx" style="left:1151px;top:794.27px;height:11.16px;line-height:11.16px;font-size:9.3px;color:#333;">Active</div>
<div class="tx" style="left:1269.4px;top:794.27px;height:11.16px;line-height:11.16px;font-size:9.3px;color:#333;">Yes</div>
<div class="a" style="left:26.2px;top:817.3px;width:13.6px;height:13.6px;border:1px solid #d4d4d4;background:#fff"></div>
<div class="tx" style="left:59px;top:818.52px;height:11.16px;line-height:11.16px;font-size:9.3px;color:#333;">Ohmyhotel HQ</div>
<div class="tx" style="left:1330.4px;top:818.52px;height:11.16px;line-height:11.16px;font-size:9.3px;color:#333;">Eco Plan</div>
<div class="tx" style="left:193px;top:818.52px;height:11.16px;line-height:11.16px;font-size:9.3px;color:#333;">2227653</div>
<div class="tx" style="left:310px;top:818.52px;height:11.16px;line-height:11.16px;font-size:9.3px;color:#333;">RAA18167</div>
<div class="tx" style="left:540.5px;top:818.52px;height:11.16px;line-height:11.16px;font-size:9.3px;color:#333;">Ocean View Standard Japanese Western Room</div>
<div class="tx" style="left:848px;top:818.52px;height:11.16px;line-height:11.16px;font-size:9.3px;color:#333;">840883</div>
<div class="tx" style="left:948.8px;top:818.52px;height:11.16px;line-height:11.16px;font-size:9.3px;color:#333;">PAB28012</div>
<div class="tx" style="left:1151px;top:818.52px;height:11.16px;line-height:11.16px;font-size:9.3px;color:#333;">Active</div>
<div class="tx" style="left:1269.4px;top:818.52px;height:11.16px;line-height:11.16px;font-size:9.3px;color:#333;">Yes</div>
<div class="a" style="left:26.2px;top:841.55px;width:13.6px;height:13.6px;border:1px solid #d4d4d4;background:#fff"></div>
<div class="tx" style="left:59px;top:842.77px;height:11.16px;line-height:11.16px;font-size:9.3px;color:#333;">Ohmyhotel HQ</div>
<div class="tx" style="left:1330.4px;top:842.77px;height:11.16px;line-height:11.16px;font-size:9.3px;color:#333;">Room Only</div>
<div class="tx" style="left:193px;top:842.77px;height:11.16px;line-height:11.16px;font-size:9.3px;color:#333;">2227653</div>
<div class="tx" style="left:310px;top:842.77px;height:11.16px;line-height:11.16px;font-size:9.3px;color:#333;">RAA18167</div>
<div class="tx" style="left:540.5px;top:842.77px;height:11.16px;line-height:11.16px;font-size:9.3px;color:#333;">Ocean View Standard Japanese Western Room</div>
<div class="tx" style="left:848px;top:842.77px;height:11.16px;line-height:11.16px;font-size:9.3px;color:#333;">840883</div>
<div class="tx" style="left:948.8px;top:842.77px;height:11.16px;line-height:11.16px;font-size:9.3px;color:#333;">PAB28012</div>
<div class="tx" style="left:1151px;top:842.77px;height:11.16px;line-height:11.16px;font-size:9.3px;color:#333;">Active</div>
<div class="tx" style="left:1269.4px;top:842.77px;height:11.16px;line-height:11.16px;font-size:9.3px;color:#333;">Yes</div>
</div>
<div id="ov"></div>
<div id="modal"><div id="mc">
<div class="a" style="left:188px;top:125px;width:1184px;height:35px;background:#464646"></div>
<div class="tx" style="left:203px;top:136.1px;height:13.2px;line-height:13.2px;font-size:11px;color:#fff;font-weight:bold;">Hotel Plan Master</div>
<svg class="a" style="left:1343px;top:137px" width="9.5" height="9.5" viewBox="0 0 9.5 9.5"><path d="M0.5 0.5L9.0 9.0M9.0 0.5L0.5 9.0" stroke="#fff" stroke-width="1.5"/></svg>
<div class="a" style="left:188px;top:160px;width:1184px;height:33px;background:#f9f8fb"></div>
<div class="a" style="left:188px;top:192px;width:1184px;height:1px;background:#e3e3e3"></div>
<div class="a" style="left:214px;top:167.5px;width:58.5px;height:25.5px;border:1px solid #dedede;border-bottom:none;border-radius:3px 3px 0 0;background:#fff"></div>
<div class="tx" style="left:230px;top:175.5px;height:12.0px;line-height:12.0px;font-size:10px;color:#111;">Detail</div>
<div class="a" style="left:188px;top:193px;width:1184px;height:616px;overflow:hidden"><div class="a" style="left:-188px;top:-193px;width:1435px;height:846px">
<div class="a" style="left:208px;top:150px;width:171px;height:615px;background:#f2f2f2"></div>
<div class="a" style="left:779px;top:150px;width:170px;height:163px;background:#f2f2f2"></div>
<div class="a" style="left:779px;top:487px;width:170px;height:120px;background:#f2f2f2"></div>
<div class="a" style="left:379px;top:150px;width:1px;height:615px;background:#e0e0e0"></div>
<div class="a" style="left:778px;top:150px;width:1px;height:163px;background:#e0e0e0"></div>
<div class="a" style="left:949px;top:150px;width:1px;height:163px;background:#e0e0e0"></div>
<div class="a" style="left:778px;top:487px;width:1px;height:120px;background:#e0e0e0"></div>
<div class="a" style="left:949px;top:487px;width:1px;height:120px;background:#e0e0e0"></div>
<div class="a" style="left:208px;top:212px;width:570px;height:1px;background:#e0e0e0"></div>
<div class="a" style="left:208px;top:263px;width:1140px;height:1px;background:#e0e0e0"></div>
<div class="a" style="left:208px;top:288px;width:570px;height:1px;background:#e0e0e0"></div>
<div class="a" style="left:208px;top:313px;width:1140px;height:1px;background:#e0e0e0"></div>
<div class="a" style="left:208px;top:487px;width:1140px;height:1px;background:#e0e0e0"></div>
<div class="a" style="left:208px;top:523px;width:1140px;height:1px;background:#e0e0e0"></div>
<div class="a" style="left:208px;top:551px;width:1140px;height:1px;background:#e0e0e0"></div>
<div class="a" style="left:208px;top:579px;width:1140px;height:1px;background:#e0e0e0"></div>
<div class="a" style="left:208px;top:607px;width:1140px;height:1px;background:#e0e0e0"></div>
<div class="a" style="left:208px;top:737px;width:1140px;height:1px;background:#e0e0e0"></div>
<div class="a" style="left:208px;top:765px;width:1140px;height:1px;background:#8c8c8c"></div>
<div class="a" style="left:388px;top:171px;width:382px;height:26px;border:1px solid #dcdcdc;border-radius:3px;background:#fff"></div>
<div class="tx" style="left:216px;top:231.7px;height:12.6px;line-height:12.6px;font-size:10.5px;color:#222;-webkit-text-stroke:0.35px #222;">Room Type Name(EN)<span style="color:#e8262c;-webkit-text-stroke:0.25px #e8262c;font-size:11px;position:relative;top:1px"> *</span></div>
<div class="a" style="left:388px;top:228px;width:382px;height:20px;border:1px solid #dcdcdc;border-radius:3px;background:#fff"></div>
<div class="tx" style="left:396.5px;top:232.74px;height:11.52px;line-height:11.52px;font-size:9.6px;color:#222;">3834593 - Junior Suite Park View Double</div>
<svg class="a" style="left:752.5px;top:236px" width="8" height="5" viewBox="0 0 8 5"><path d="M0.7 0.2H7.3Q8 0.2 7.6 0.9L4.5 4.6Q4 5.1 3.5 4.6L0.4 0.9Q0 0.2 0.7 0.2z" fill="#111"/></svg>
<div class="tx" style="left:216px;top:269.2px;height:12.6px;line-height:12.6px;font-size:10.5px;color:#222;-webkit-text-stroke:0.35px #222;">Single Use<span style="color:#e8262c;-webkit-text-stroke:0.25px #e8262c;font-size:11px;position:relative;top:1px"> *</span></div>
<div class="a" style="left:388px;top:268.5px;width:14px;height:14px;border:1px solid #d6d6d6;border-radius:50%;background:#fff"></div>
<div class="tx" style="left:410px;top:269.76px;height:12.48px;line-height:12.48px;font-size:10.4px;color:#222;">Yes</div>
<svg class="a" style="left:435px;top:268.5px" width="14" height="14" viewBox="0 0 14 14"><circle cx="7" cy="7" r="7" fill="#8cd8f0"/><path d="M3.1 6.0L6.5 9.1L10.8 4.4" fill="none" stroke="#fff" stroke-width="1.1"/></svg>
<div class="tx" style="left:457px;top:269.76px;height:12.48px;line-height:12.48px;font-size:10.4px;color:#222;">No</div>
<div class="tx" style="left:216px;top:294.2px;height:12.6px;line-height:12.6px;font-size:10.5px;color:#222;-webkit-text-stroke:0.35px #222;">Room Charge<span style="color:#e8262c;-webkit-text-stroke:0.25px #e8262c;font-size:11px;position:relative;top:1px"> *</span></div>
<svg class="a" style="left:388px;top:293.5px" width="14" height="14" viewBox="0 0 14 14"><circle cx="7" cy="7" r="7" fill="#c8ebf6"/><path d="M3.1 6.0L6.5 9.1L10.8 4.4" fill="none" stroke="#fff" stroke-width="1.1"/></svg>
<div class="tx" style="left:410px;top:294.76px;height:12.48px;line-height:12.48px;font-size:10.4px;color:#222;">Room Charge</div>
<div class="a" style="left:481px;top:293.5px;width:14px;height:14px;border:1px solid #e2e2e2;border-radius:50%;background:#efefef"></div>
<div class="tx" style="left:503.5px;top:294.76px;height:12.48px;line-height:12.48px;font-size:10.4px;color:#222;">Occupancy Charge</div>
<div class="tx" style="left:787px;top:205.7px;height:12.6px;line-height:12.6px;font-size:10.5px;color:#222;-webkit-text-stroke:0.35px #222;">Need to Mapping with CMS</div>
<div class="a" style="left:958px;top:189.5px;width:14px;height:14px;border:1px solid #e2e2e2;border-radius:50%;background:#efefef"></div>
<div class="tx" style="left:980.5px;top:190.76px;height:12.48px;line-height:12.48px;font-size:10.4px;color:#222;">Yes</div>
<svg class="a" style="left:1005px;top:189.5px" width="14" height="14" viewBox="0 0 14 14"><circle cx="7" cy="7" r="7" fill="#c8ebf6"/><path d="M3.1 6.0L6.5 9.1L10.8 4.4" fill="none" stroke="#fff" stroke-width="1.1"/></svg>
<div class="tx" style="left:1027px;top:190.76px;height:12.48px;line-height:12.48px;font-size:10.4px;color:#222;">No</div>
<div class="a" style="left:958px;top:212.5px;width:14px;height:14px;border:1px solid #e2e2e2;border-radius:50%;background:#efefef"></div>
<div class="tx" style="left:980.5px;top:213.76px;height:12.48px;line-height:12.48px;font-size:10.4px;color:#222;">Temairazu</div>
<div class="a" style="left:1036px;top:212.5px;width:14px;height:14px;border:1px solid #e2e2e2;border-radius:50%;background:#efefef"></div>
<div class="tx" style="left:1058.5px;top:213.76px;height:12.48px;line-height:12.48px;font-size:10.4px;color:#222;">Sanha</div>
<div class="a" style="left:1095px;top:212.5px;width:14px;height:14px;border:1px solid #e2e2e2;border-radius:50%;background:#efefef"></div>
<div class="tx" style="left:1117.5px;top:213.76px;height:12.48px;line-height:12.48px;font-size:10.4px;color:#222;">Siteminder</div>
<div class="a" style="left:1176px;top:212.5px;width:14px;height:14px;border:1px solid #e2e2e2;border-radius:50%;background:#efefef"></div>
<div class="tx" style="left:1198.5px;top:213.76px;height:12.48px;line-height:12.48px;font-size:10.4px;color:#222;">HotelStory</div>
<div class="a" style="left:1256px;top:212.5px;width:14px;height:14px;border:1px solid #e2e2e2;border-radius:50%;background:#efefef"></div>
<div class="tx" style="left:1278.5px;top:213.76px;height:12.48px;line-height:12.48px;font-size:10.4px;color:#222;">Neppan</div>
<div class="a" style="left:958px;top:236.3px;width:14px;height:14px;border:1px solid #e2e2e2;border-radius:50%;background:#efefef"></div>
<div class="tx" style="left:980.5px;top:237.56px;height:12.48px;line-height:12.48px;font-size:10.4px;color:#222;">DEdge</div>
<div class="tx" style="left:787px;top:281.7px;height:12.6px;line-height:12.6px;font-size:10.5px;color:#222;-webkit-text-stroke:0.35px #222;">CMS/PMS Information</div>
<div class="tx" style="left:216px;top:393.7px;height:12.6px;line-height:12.6px;font-size:10.5px;color:#222;-webkit-text-stroke:0.35px #222;">Plan Name<span style="color:#e8262c;-webkit-text-stroke:0.25px #e8262c;font-size:11px;position:relative;top:1px"> *</span></div>
<div class="a" style="left:388px;top:330px;width:165px;height:19px;border:1px solid #dcdcdc;border-radius:3px;background:#fff"></div>
<div class="tx" style="left:396.5px;top:333.74px;height:11.52px;line-height:11.52px;font-size:9.6px;color:#222;">Free Breakfast</div>
<svg class="a" style="left:536px;top:337.5px" width="8" height="5" viewBox="0 0 8 5"><path d="M0.7 0.2H7.3Q8 0.2 7.6 0.9L4.5 4.6Q4 5.1 3.5 4.6L0.4 0.9Q0 0.2 0.7 0.2z" fill="#111"/></svg>
<div class="a" style="left:557px;top:330px;width:166px;height:19px;border:1px solid #dcdcdc;border-radius:3px;background:#fff"></div>
<div class="tx" style="left:565.5px;top:333.74px;height:11.52px;line-height:11.52px;font-size:9.6px;color:#222;">Breakfast included</div>
<svg class="a" style="left:706px;top:337.5px" width="8" height="5" viewBox="0 0 8 5"><path d="M0.7 0.2H7.3Q8 0.2 7.6 0.9L4.5 4.6Q4 5.1 3.5 4.6L0.4 0.9Q0 0.2 0.7 0.2z" fill="#111"/></svg>
<div class="a" style="left:727px;top:330px;width:166px;height:19px;border:1px solid #dcdcdc;border-radius:3px;background:#fff"></div>
<div class="tx" style="left:735.5px;top:333.74px;height:11.52px;line-height:11.52px;font-size:9.6px;color:#222;">Breakfast Included</div>
<svg class="a" style="left:876px;top:337.5px" width="8" height="5" viewBox="0 0 8 5"><path d="M0.7 0.2H7.3Q8 0.2 7.6 0.9L4.5 4.6Q4 5.1 3.5 4.6L0.4 0.9Q0 0.2 0.7 0.2z" fill="#111"/></svg>
<div class="tx" style="left:909.5px;top:333.74px;height:11.52px;line-height:11.52px;font-size:9.6px;color:#222;">Check In</div>
<div class="a" style="left:951px;top:330px;width:166px;height:19px;border:1px solid #dcdcdc;border-radius:3px;background:#f0f0f0"></div>
<div class="tx" style="left:960px;top:334.6px;height:10.8px;line-height:10.8px;font-size:9px;color:#c4c4c4;font-style:italic;">HH:MM</div>
<div class="tx" style="left:1125px;top:333.74px;height:11.52px;line-height:11.52px;font-size:9.6px;color:#222;">Check Out</div>
<div class="a" style="left:1174px;top:330px;width:166px;height:19px;border:1px solid #dcdcdc;border-radius:3px;background:#f0f0f0"></div>
<div class="tx" style="left:1183px;top:334.6px;height:10.8px;line-height:10.8px;font-size:9px;color:#c4c4c4;font-style:italic;">HH:MM</div>
<div class="a" style="left:388px;top:359px;width:952px;height:19px;border:1px solid #dcdcdc;border-radius:3px;background:#fff"></div>
<div class="tx" style="left:396.5px;top:363.44px;height:11.52px;line-height:11.52px;font-size:9.6px;color:#222;">Free Breakfast</div>
<svg class="a" style="left:1327px;top:365px" width="8" height="8" viewBox="0 0 8 8"><path d="M0.5 0.5L7.5 7.5M7.5 0.5L0.5 7.5" stroke="#c4c4c4" stroke-width="1.5"/></svg>
<div class="a" style="left:388px;top:382px;width:952px;height:19px;border:1px solid #dcdcdc;border-radius:3px;background:#fff"></div>
<div class="tx" style="left:396.5px;top:386.44px;height:11.52px;line-height:11.52px;font-size:9.6px;color:#222;">무료조식</div>
<svg class="a" style="left:1327px;top:388px" width="8" height="8" viewBox="0 0 8 8"><path d="M0.5 0.5L7.5 7.5M7.5 0.5L0.5 7.5" stroke="#c4c4c4" stroke-width="1.5"/></svg>
<div class="a" style="left:388px;top:405px;width:952px;height:19px;border:1px solid #dcdcdc;border-radius:3px;background:#fff"></div>
<div class="tx" style="left:396.5px;top:409.44px;height:11.52px;line-height:11.52px;font-size:9.6px;color:#222;">無料朝食</div>
<svg class="a" style="left:1327px;top:411px" width="8" height="8" viewBox="0 0 8 8"><path d="M0.5 0.5L7.5 7.5M7.5 0.5L0.5 7.5" stroke="#c4c4c4" stroke-width="1.5"/></svg>
<div class="a" style="left:388px;top:429px;width:952px;height:19px;border:1px solid #dcdcdc;border-radius:3px;background:#fff"></div>
<div class="tx" style="left:396.5px;top:433.44px;height:11.52px;line-height:11.52px;font-size:9.6px;color:#222;">Miễn phí bữa sáng</div>
<svg class="a" style="left:1327px;top:435px" width="8" height="8" viewBox="0 0 8 8"><path d="M0.5 0.5L7.5 7.5M7.5 0.5L0.5 7.5" stroke="#c4c4c4" stroke-width="1.5"/></svg>
<div class="a" style="left:388px;top:452px;width:952px;height:19px;border:1px solid #dcdcdc;border-radius:3px;background:#fff"></div>
<div class="tx" style="left:396.5px;top:456.44px;height:11.52px;line-height:11.52px;font-size:9.6px;color:#222;">免费早餐</div>
<svg class="a" style="left:1327px;top:458px" width="8" height="8" viewBox="0 0 8 8"><path d="M0.5 0.5L7.5 7.5M7.5 0.5L0.5 7.5" stroke="#c4c4c4" stroke-width="1.5"/></svg>
<div class="tx" style="left:216px;top:498.7px;height:12.6px;line-height:12.6px;font-size:10.5px;color:#222;-webkit-text-stroke:0.35px #222;">Min Pax Count<span style="color:#e8262c;-webkit-text-stroke:0.25px #e8262c;font-size:11px;position:relative;top:1px"> *</span></div>
<div class="tx" style="left:394px;top:499.74px;height:11.52px;line-height:11.52px;font-size:9.6px;color:#222;">ADT</div>
<div class="a" style="left:419px;top:496px;width:94px;height:19px;border:1px solid #dcdcdc;border-radius:3px;background:#fff"></div>
<div class="tx" style="left:427.5px;top:500.18px;height:12.24px;line-height:12.24px;font-size:10.2px;color:#222;">1</div>
<svg class="a" style="left:496px;top:503.5px" width="8" height="5" viewBox="0 0 8 5"><path d="M0.7 0.2H7.3Q8 0.2 7.6 0.9L4.5 4.6Q4 5.1 3.5 4.6L0.4 0.9Q0 0.2 0.7 0.2z" fill="#111"/></svg>
<div class="tx" style="left:519.5px;top:499.74px;height:11.52px;line-height:11.52px;font-size:9.6px;color:#222;">CHD</div>
<div class="a" style="left:546px;top:496px;width:95px;height:19px;border:1px solid #dcdcdc;border-radius:3px;background:#fff"></div>
<div class="tx" style="left:555px;top:500.18px;height:12.24px;line-height:12.24px;font-size:10.2px;color:#222;">0</div>
<svg class="a" style="left:623.5px;top:503.5px" width="8" height="5" viewBox="0 0 8 5"><path d="M0.7 0.2H7.3Q8 0.2 7.6 0.9L4.5 4.6Q4 5.1 3.5 4.6L0.4 0.9Q0 0.2 0.7 0.2z" fill="#111"/></svg>
<div class="tx" style="left:647.5px;top:499.74px;height:11.52px;line-height:11.52px;font-size:9.6px;color:#222;">Total</div>
<div class="a" style="left:675px;top:496px;width:95px;height:19px;border:1px solid #dcdcdc;border-radius:3px;background:#f0f0f0"></div>
<div class="tx" style="left:684px;top:500.18px;height:12.24px;line-height:12.24px;font-size:10.2px;color:#888;">1</div>
<div class="tx" style="left:787px;top:498.7px;height:12.6px;line-height:12.6px;font-size:10.5px;color:#222;-webkit-text-stroke:0.35px #222;">Max Pax Count<span style="color:#e8262c;-webkit-text-stroke:0.25px #e8262c;font-size:11px;position:relative;top:1px"> *</span></div>
<div class="tx" style="left:964.5px;top:499.74px;height:11.52px;line-height:11.52px;font-size:9.6px;color:#222;">ADT</div>
<div class="a" style="left:990px;top:496px;width:94px;height:19px;border:1px solid #dcdcdc;border-radius:3px;background:#fff"></div>
<div class="tx" style="left:998.0px;top:500.18px;height:12.24px;line-height:12.24px;font-size:10.2px;color:#222;">2</div>
<svg class="a" style="left:1066.5px;top:503.5px" width="8" height="5" viewBox="0 0 8 5"><path d="M0.7 0.2H7.3Q8 0.2 7.6 0.9L4.5 4.6Q4 5.1 3.5 4.6L0.4 0.9Q0 0.2 0.7 0.2z" fill="#111"/></svg>
<div class="tx" style="left:1090.0px;top:499.74px;height:11.52px;line-height:11.52px;font-size:9.6px;color:#222;">CHD</div>
<div class="a" style="left:1116px;top:496px;width:95px;height:19px;border:1px solid #dcdcdc;border-radius:3px;background:#fff"></div>
<div class="tx" style="left:1125.5px;top:500.18px;height:12.24px;line-height:12.24px;font-size:10.2px;color:#222;">1</div>
<svg class="a" style="left:1194.0px;top:503.5px" width="8" height="5" viewBox="0 0 8 5"><path d="M0.7 0.2H7.3Q8 0.2 7.6 0.9L4.5 4.6Q4 5.1 3.5 4.6L0.4 0.9Q0 0.2 0.7 0.2z" fill="#111"/></svg>
<div class="tx" style="left:1218.0px;top:499.74px;height:11.52px;line-height:11.52px;font-size:9.6px;color:#222;">Total</div>
<div class="a" style="left:1246px;top:496px;width:95px;height:19px;border:1px solid #dcdcdc;border-radius:3px;background:#f0f0f0"></div>
<div class="tx" style="left:1254.5px;top:500.18px;height:12.24px;line-height:12.24px;font-size:10.2px;color:#888;">3</div>
<div class="tx" style="left:216px;top:530.7px;height:12.6px;line-height:12.6px;font-size:10.5px;color:#222;-webkit-text-stroke:0.35px #222;">Cut Off Date<span style="color:#e8262c;-webkit-text-stroke:0.25px #e8262c;font-size:11px;position:relative;top:1px"> *</span></div>
<div class="a" style="left:388px;top:528px;width:80px;height:19px;border:1px solid #dcdcdc;border-radius:3px;background:#fff"></div>
<div class="tx" style="left:397px;top:532.18px;height:12.24px;line-height:12.24px;font-size:10.2px;color:#222;">0</div>
<svg class="a" style="left:455px;top:534px" width="8" height="8" viewBox="0 0 8 8"><path d="M0.5 0.5L7.5 7.5M7.5 0.5L0.5 7.5" stroke="#c4c4c4" stroke-width="1.5"/></svg>
<div class="tx" style="left:474px;top:531.8px;height:11.4px;line-height:11.4px;font-size:9.5px;color:#222;">Days Before Check In</div>
<div class="tx" style="left:787px;top:530.7px;height:12.6px;line-height:12.6px;font-size:10.5px;color:#222;-webkit-text-stroke:0.35px #222;">Cut Off Time<span style="color:#e8262c;-webkit-text-stroke:0.25px #e8262c;font-size:11px;position:relative;top:1px"> *</span></div>
<div class="a" style="left:958px;top:528px;width:154px;height:19px;border:1px solid #dcdcdc;border-radius:3px;background:#fff"></div>
<div class="tx" style="left:966.5px;top:531.82px;height:12.36px;line-height:12.36px;font-size:10.3px;color:#222;">23:59:59</div>
<svg class="a" style="left:1099px;top:534px" width="8" height="8" viewBox="0 0 8 8"><path d="M0.5 0.5L7.5 7.5M7.5 0.5L0.5 7.5" stroke="#c4c4c4" stroke-width="1.5"/></svg>
<div class="tx" style="left:216px;top:558.7px;height:12.6px;line-height:12.6px;font-size:10.5px;color:#222;-webkit-text-stroke:0.35px #222;">Max Booking Count<span style="color:#e8262c;-webkit-text-stroke:0.25px #e8262c;font-size:11px;position:relative;top:1px"> *</span></div>
<div class="tx" style="left:388px;top:559.62px;height:12.36px;line-height:12.36px;font-size:10.3px;color:#222;">99</div>
<div class="tx" style="left:787px;top:558.7px;height:12.6px;line-height:12.6px;font-size:10.5px;color:#222;-webkit-text-stroke:0.35px #222;">Data Status<span style="color:#e8262c;-webkit-text-stroke:0.25px #e8262c;font-size:11px;position:relative;top:1px"> *</span></div>
<div class="a" style="left:958px;top:556px;width:382px;height:19px;border:1px solid #dcdcdc;border-radius:3px;background:#fff"></div>
<div class="tx" style="left:966.5px;top:559.88px;height:12.24px;line-height:12.24px;font-size:10.2px;color:#222;">Active</div>
<svg class="a" style="left:1323px;top:563.5px" width="8" height="5" viewBox="0 0 8 5"><path d="M0.7 0.2H7.3Q8 0.2 7.6 0.9L4.5 4.6Q4 5.1 3.5 4.6L0.4 0.9Q0 0.2 0.7 0.2z" fill="#111"/></svg>
<div class="tx" style="left:216px;top:587.2px;height:12.6px;line-height:12.6px;font-size:10.5px;color:#222;-webkit-text-stroke:0.35px #222;">Non Refundable<span style="color:#e8262c;-webkit-text-stroke:0.25px #e8262c;font-size:11px;position:relative;top:1px"> *</span></div>
<div class="a" style="left:388px;top:586.5px;width:14px;height:14px;border:1px solid #d6d6d6;border-radius:50%;background:#fff"></div>
<div class="tx" style="left:410px;top:587.76px;height:12.48px;line-height:12.48px;font-size:10.4px;color:#222;">Yes</div>
<svg class="a" style="left:435px;top:586.5px" width="14" height="14" viewBox="0 0 14 14"><circle cx="7" cy="7" r="7" fill="#8cd8f0"/><path d="M3.1 6.0L6.5 9.1L10.8 4.4" fill="none" stroke="#fff" stroke-width="1.1"/></svg>
<div class="tx" style="left:457px;top:587.76px;height:12.48px;line-height:12.48px;font-size:10.4px;color:#222;">No</div>
<div class="tx" style="left:787px;top:587.2px;height:12.6px;line-height:12.6px;font-size:10.5px;color:#222;-webkit-text-stroke:0.35px #222;">OMH Plan Code</div>
<div class="a" style="left:958px;top:584px;width:382px;height:19px;border:1px solid #dcdcdc;border-radius:3px;background:#f0f0f0"></div>
<div class="tx" style="left:966.5px;top:587.88px;height:12.24px;line-height:12.24px;font-size:10.2px;color:#777;">PAB49528</div>
<div class="tx" style="left:216px;top:665.7px;height:12.6px;line-height:12.6px;font-size:10.5px;color:#222;-webkit-text-stroke:0.35px #222;">Cancellation Policy</div>
<div class="tx" style="left:388px;top:624.0px;height:12.0px;line-height:12.0px;font-size:10px;color:#111;-webkit-text-stroke:0.35px #111;">Cancellation Policy 1</div>
<div class="a" style="left:491px;top:620px;width:19px;height:20px;border:1px solid #848d97;border-radius:2px;background:#fff"></div>
<svg class="a" style="left:496.0px;top:625.5px" width="9" height="9" viewBox="0 0 9 9"><path d="M4.5 1.2V7.8M1.2 4.5H7.8" stroke="#848d97" stroke-width="1.7"/></svg>
<div class="tx" style="left:388px;top:650.74px;height:11.52px;line-height:11.52px;font-size:9.6px;color:#222;">Applied From ~ To Date</div>
<div class="a" style="left:495px;top:646px;width:174px;height:19px;border:1px solid #dcdcdc;border-radius:3px;background:#fff"></div>
<svg class="a" style="left:508px;top:649px" width="11" height="13" viewBox="0 0 11 13"><rect x="0.3" y="2.2" width="10.5" height="10.6" rx="1.6" fill="#111"/><rect x="1.6" y="4.7" width="7.9" height="6.8" rx="0.5" fill="#fff"/><rect x="2.4" y="0" width="1.5" height="3.2" rx="0.5" fill="#111"/><rect x="7" y="0" width="1.5" height="3.2" rx="0.5" fill="#111"/><g fill="#111"><rect x="2.5" y="5.9" width="1.4" height="1.3"/><rect x="4.8" y="5.9" width="1.4" height="1.3"/><rect x="7.1" y="5.9" width="1.4" height="1.3"/><rect x="2.5" y="8.1" width="1.4" height="1.3"/><rect x="4.8" y="8.1" width="1.4" height="1.3"/><rect x="7.1" y="8.1" width="1.4" height="1.3"/></g></svg>
<div class="tx" style="left:528px;top:650.32px;height:12.96px;line-height:12.96px;font-size:10.8px;color:#222;">2025-12-30</div>
<div class="tx" style="left:672.5px;top:650.74px;height:11.52px;line-height:11.52px;font-size:9.6px;color:#222;">-</div>
<div class="a" style="left:681px;top:646px;width:174px;height:19px;border:1px solid #dcdcdc;border-radius:3px;background:#fff"></div>
<svg class="a" style="left:694px;top:649px" width="11" height="13" viewBox="0 0 11 13"><rect x="0.3" y="2.2" width="10.5" height="10.6" rx="1.6" fill="#111"/><rect x="1.6" y="4.7" width="7.9" height="6.8" rx="0.5" fill="#fff"/><rect x="2.4" y="0" width="1.5" height="3.2" rx="0.5" fill="#111"/><rect x="7" y="0" width="1.5" height="3.2" rx="0.5" fill="#111"/><g fill="#111"><rect x="2.5" y="5.9" width="1.4" height="1.3"/><rect x="4.8" y="5.9" width="1.4" height="1.3"/><rect x="7.1" y="5.9" width="1.4" height="1.3"/><rect x="2.5" y="8.1" width="1.4" height="1.3"/><rect x="4.8" y="8.1" width="1.4" height="1.3"/><rect x="7.1" y="8.1" width="1.4" height="1.3"/></g></svg>
<div class="tx" style="left:714.5px;top:650.32px;height:12.96px;line-height:12.96px;font-size:10.8px;color:#222;">2099-12-31</div>
<div class="a" style="left:871.5px;top:648.5px;width:14px;height:14px;border:1px solid #d6d6d6;border-radius:50%;background:#fff"></div>
<div class="tx" style="left:893.5px;top:649.76px;height:12.48px;line-height:12.48px;font-size:10.4px;color:#222;">First Night</div>
<svg class="a" style="left:950px;top:648.5px" width="14" height="14" viewBox="0 0 14 14"><circle cx="7" cy="7" r="7" fill="#8cd8f0"/><path d="M3.1 6.0L6.5 9.1L10.8 4.4" fill="none" stroke="#fff" stroke-width="1.1"/></svg>
<div class="tx" style="left:971.5px;top:649.76px;height:12.48px;line-height:12.48px;font-size:10.4px;color:#222;">Whole Nights</div>
<div class="a" style="left:388px;top:673px;width:952px;height:44px;border:1px solid #e0e0e0;background:#fff"></div>
<div class="a" style="left:397px;top:689px;width:80px;height:19px;border:1px solid #dcdcdc;border-radius:3px;background:#fff"></div>
<div class="tx" style="left:406px;top:693.18px;height:12.24px;line-height:12.24px;font-size:10.2px;color:#222;">0</div>
<svg class="a" style="left:463.5px;top:695px" width="8" height="8" viewBox="0 0 8 8"><path d="M0.5 0.5L7.5 7.5M7.5 0.5L0.5 7.5" stroke="#c4c4c4" stroke-width="1.5"/></svg>
<div class="tx" style="left:483px;top:692.74px;height:11.52px;line-height:11.52px;font-size:9.6px;color:#222;">Days Before Check In</div>
<div class="tx" style="left:607px;top:692.74px;height:11.52px;line-height:11.52px;font-size:9.6px;color:#222;">Charge</div>
<div class="a" style="left:651px;top:689px;width:69px;height:19px;border:1px solid #dcdcdc;border-radius:3px;background:#efefef"></div>
<div class="tx" style="left:660px;top:693.54px;height:11.52px;line-height:11.52px;font-size:9.6px;color:#444;">Rate</div>
<svg class="a" style="left:702px;top:696.5px" width="8" height="5" viewBox="0 0 8 5"><path d="M0.7 0.2H7.3Q8 0.2 7.6 0.9L4.5 4.6Q4 5.1 3.5 4.6L0.4 0.9Q0 0.2 0.7 0.2z" fill="#111"/></svg>
<div class="a" style="left:727px;top:689px;width:80px;height:19px;border:1px solid #dcdcdc;border-radius:3px;background:#fff"></div>
<div class="tx" style="left:736px;top:692.98px;height:12.24px;line-height:12.24px;font-size:10.2px;color:#222;">100</div>
<svg class="a" style="left:794px;top:695px" width="8" height="8" viewBox="0 0 8 8"><path d="M0.5 0.5L7.5 7.5M7.5 0.5L0.5 7.5" stroke="#c4c4c4" stroke-width="1.5"/></svg>
<div class="a" style="left:821px;top:689px;width:19px;height:19px;border:1px solid #848d97;border-radius:2px;background:#fff"></div>
<svg class="a" style="left:826.0px;top:694.0px" width="9" height="9" viewBox="0 0 9 9"><path d="M4.5 1.2V7.8M1.2 4.5H7.8" stroke="#848d97" stroke-width="1.7"/></svg>
<div class="tx" style="left:216px;top:745.2px;height:12.6px;line-height:12.6px;font-size:10.5px;color:#222;-webkit-text-stroke:0.35px #222;">Vendor Remark</div>
<div class="a" style="left:388px;top:742px;width:952px;height:19px;border:1px solid #dcdcdc;border-radius:3px;background:#fff"></div>
<div class="a" style="left:1247px;top:774px;width:47px;height:19px;background:#818a94;border-radius:3px"></div>
<div class="tx" style="left:1260px;top:777.94px;height:11.52px;line-height:11.52px;font-size:9.6px;color:#fff;-webkit-text-stroke:0.35px #fff;">Save</div>
<div class="a" style="left:1298px;top:774px;width:50px;height:19px;border:1px solid #d5d5d5;border-radius:3px;background:#fff"></div>
<div class="tx" style="left:1311px;top:777.38px;height:12.24px;line-height:12.24px;font-size:10.2px;color:#222;">Close</div>
</div></div>
<div class="a" style="left:1368px;top:193px;width:4px;height:110px;background:#e8e8e8"></div>
<div class="a" style="left:1368px;top:303px;width:4px;height:506px;background:#9c9c9c"></div>
<div class="a" style="left:370px;top:640px;width:494px;height:109px;border:5px solid #e41c1c"></div>
</div></div>
</body></html>
